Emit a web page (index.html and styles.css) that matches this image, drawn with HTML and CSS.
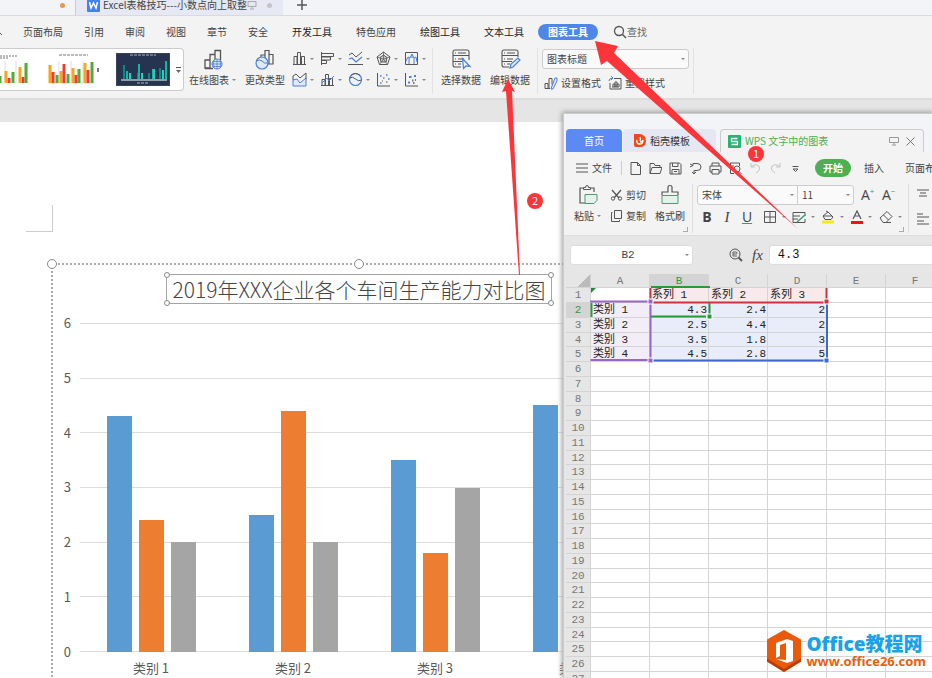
FILE: index.html
```html
<!DOCTYPE html>
<html lang="zh-CN">
<head>
	<meta charset="UTF-8">
	<meta name="viewport" content="width=device-width, initial-scale=1.0">
	<title>Excel表格技巧</title>
	<link rel="stylesheet" href="styles.css">
</head>
<body>
	<!-- Writer window -->
	<div class="writer">
		<div class="doc-tabs">
			<span class="unsaved"></span>
			<div class="doc-tab">
				<svg class="logo-w" width="13" height="13" viewBox="0 0 13 13"><rect width="13" height="13" rx="1" fill="#3f83ee"/><path d="M2.500 3l1.500 6 2.500-5L9 9l1.500-6" fill="none" stroke="#fff" stroke-width="1.500"/></svg>
				<span>Excel表格技巧---小数点向上取整</span>
				<svg class="screen" width="10" height="10" viewBox="0 0 10 10"><path d="M1 1.500h8v5H1zM5 6.500v2M3 9h4" stroke="#aaa"/></svg>
				<span class="grey-dot"></span>
			</div>
			<button class="new-tab" aria-label="新建"><svg width="12" height="12" viewBox="0 0 12 12"><path d="M6 1v10M1 6h10" stroke-width="1.500"/></svg></button>
		</div>

		<nav class="menu">
			<svg class="menu-cut" width="3" height="8" viewBox="0 0 3 8"><path d="M0 5l2 2"/></svg>
			<a href="#">页面布局</a>
			<a href="#">引用</a>
			<a href="#">审阅</a>
			<a href="#">视图</a>
			<a href="#">章节</a>
			<a href="#">安全</a>
			<a href="#" class="tool dark">开发工具</a>
			<a href="#" class="tool">特色应用</a>
			<a href="#" class="tool dark">绘图工具</a>
			<a href="#" class="tool dark">文本工具</a>
			<a href="#" class="pill">图表工具</a>
			<button class="find"><svg width="14" height="14" viewBox="0 0 14 14"><circle cx="6" cy="6" r="4.500" stroke-width="1.300"/><path d="M9.300 9.300L13 13" stroke-width="1.500"/></svg>查找</button>
		</nav>

		<div class="ribbon">
			<div class="gallery">
				<svg class="thumb" width="32" height="34" viewBox="0 0 32 34">
					<path d="M0 3h18M0 5h8" stroke="#777" stroke-dasharray="2 1"/>
					<path d="M5 8v22M16 8v22M27 8v22" stroke="#ddd" stroke-width="1"/>
					<path d="M9 25v5M23 24v6" stroke="#f03c33" stroke-width="3"/>
					<path d="M6 18v12M20 14v16" stroke="#f7a51c" stroke-width="3"/>
					<path d="M0 23v7M13 19v11M26 10v20" stroke="#55a83b" stroke-width="3"/>
				</svg>
				<svg class="thumb" width="54" height="34" viewBox="0 0 54 34">
					<path d="M12 2h29" stroke="#777" stroke-dasharray="3 1"/>
					<path d="M2 30h46M12 8v22M24 8v22M36 8v22" stroke="#ddd"/>
					<path d="M3 12v18M14 18v12M26 15v15M38 10v20" stroke="#f7a51c" stroke-width="3"/>
					<path d="M6 19v11M17 11v19M29 22v8M41 17v13" stroke="#f03c33" stroke-width="3"/>
					<path d="M10 22v8M21 21v9M32 16v14M45 9v21" stroke="#55a83b" stroke-width="3"/>
					<path d="M51 15v4" stroke="#778" stroke-width="2"/>
				</svg>
				<svg class="thumb" width="54" height="33" viewBox="0 0 54 33">
					<rect width="54" height="33" fill="#27344f"/>
					<path d="M14 2h26M21 30h12" stroke="#aeb7c8" stroke-dasharray="3 1"/>
					<path d="M5 27h46" stroke="#fff"/>
					<path d="M8 12v14M22 20v6M33 20v6M44 15v11" stroke="#10857f" stroke-width="2"/>
					<path d="M11 18v8M23 11v15M37 16v10M50 8v18" stroke="#0fb9a5" stroke-width="2"/>
					<path d="M14 20v6M26 20v6M38 16v10M47 17v9" stroke="#19d3bb" stroke-width="2"/>
				</svg>
				<button class="more" aria-label="更多样式"><svg width="7" height="8" viewBox="0 0 7 8"><path d="M1 1.500h5"/><path d="M1 4h5L3.500 7z" fill="#666" stroke="none"/></svg></button>
			</div>
			<button class="big">
				<svg width="22" height="22" viewBox="0 0 22 22"><path d="M3 19V11h5v8zM8 19V5.500h5V11M13 11V1.500h5.500V11M3 19.500h8" stroke-width="1.300"/><circle cx="15" cy="15" r="5" fill="#dfe9fb" stroke="#4b7fdb"/><path d="M10 15h10M15 10v10M12 11.500q-1 4 0 7M18 11.500q1 4 0 7M11 12.500h8M11 17.500h8" stroke="#4b7fdb" stroke-width=".8"/></svg>
				<span>在线图表<i class="caret"></i></span>
			</button>
			<button class="big">
				<svg width="22" height="22" viewBox="0 0 22 22"><path d="M7 9V6h4v8M11 14V1.500h4V15M15 15V5.500h4V15h-7" stroke-width="1.200"/><circle cx="8" cy="14" r="6" fill="#dfe9fb" stroke="#4b7fdb" stroke-width="1.200"/><path d="M2 12q4-2 6 0 2 3 6 2" stroke="#4b7fdb"/></svg>
				<span>更改类型</span>
			</button>
			<div class="kinds">
				<button aria-label="柱形图"><svg width="15" height="15" viewBox="0 0 15 15"><path d="M2 13.500V5.500h3v8M5.500 13.500v-12h3v12M9.500 13.500v-8h3v8M1 13.500h13"/></svg><i class="caret"></i></button>
				<button aria-label="条形图"><svg width="15" height="15" viewBox="0 0 15 15"><path d="M1.500 1v13M1.500 2.500h12v3h-12M1.500 6h9v3h-9M1.500 9.500h5v3h-5"/></svg><i class="caret"></i></button>
				<button aria-label="折线图"><svg width="15" height="15" viewBox="0 0 15 15"><path d="M1 4l3-2 4 4 6-5M0 13.500h15"/><path d="M1 8l3-1 4 4 6-5" stroke="#4b7fdb" stroke-width="1.200"/></svg><i class="caret"></i></button>
				<button aria-label="雷达图"><svg width="15" height="15" viewBox="0 0 15 15"><path d="M7.500 1L14 6l-2.500 7.500h-8L1 6z"/><path d="M7.500 4l3.500 2.500-1 4.500H5L4 6.500z" fill="#ccc"/><path d="M7.500 1v7M1 6l6.500 2L14 6M3.500 13.500l4-5.500 4 5.500" stroke-width=".7"/></svg><i class="caret"></i></button>
				<button aria-label="股价图"><svg width="15" height="15" viewBox="0 0 15 15"><path d="M1.500 1.500h12v12h-12z"/><path d="M2 10l2-4 2 1 2-4 2 4 2-1 1 5M5 7v6M8 4v3M10 7v6" stroke="#4b7fdb"/></svg><i class="caret"></i></button>
				<button aria-label="面积图"><svg width="15" height="15" viewBox="0 0 15 15"><path d="M1 8v6h13V6l-6 5-3-4z" fill="#dfe9fb" stroke="#4b7fdb"/><path d="M1 8V4l3-2 4 4 6-5v6"/></svg><i class="caret"></i></button>
				<button aria-label="组合图"><svg width="15" height="15" viewBox="0 0 15 15"><path d="M2 13.500V7.500h3v6M5.500 13.500v-11h3v11M9.500 13.500v-7h3v7M1 13.500h13"/><path d="M2 11l5-5 2 3 5-5" stroke="#4b7fdb"/></svg><i class="caret"></i></button>
				<button aria-label="饼图"><svg width="15" height="15" viewBox="0 0 15 15"><circle cx="7.500" cy="7.500" r="6" fill="#edf3fd" stroke="#4b7fdb" stroke-width="1.200"/><path d="M1.500 6q3-2 6 1 3 3 6 1M3 3.500q4-4 9 0"/></svg><i class="caret"></i></button>
				<button aria-label="散点图"><svg width="15" height="15" viewBox="0 0 15 15"><path d="M1.500 1v13H14"/><path d="M4 4h1.500M10 3h1.500M12 7h1.500M4 11h1.500" stroke="#4b7fdb" stroke-width="1.500"/><path d="M7 6h1.500M6 9h1M10 10h1.500"/></svg><i class="caret"></i></button>
				<button aria-label="气泡图"><svg width="15" height="15" viewBox="0 0 15 15"><path d="M1.500 1v13H14"/><path d="M5 5h2.500M10 4h2M4 10.500h2" stroke="#4b7fdb" stroke-width="2"/><path d="M8 8.500h1.500M11 8h1M9 11h1.500" stroke="#777" stroke-width="2"/></svg><i class="caret"></i></button>
			</div>
			<div class="split">
				<button class="big">
					<svg width="22" height="22" viewBox="0 0 22 22"><path d="M11 18H5q-2 0-2-2V3q0-2 2-2h12q2 0 2 2v8M3 6.500h16M3 12.500h9M8 4h8M8 10h6M5 4h1M5 10h1M5 15h1M8 15h3" stroke-width="1.100"/><path d="M12.500 9.500l1 10 2.500-2.500 4 .5z" fill="#edf3fd" stroke="#4b7fdb" stroke-width="1.200"/></svg>
					<span>选择数据</span>
				</button>
				<button class="big">
					<svg width="22" height="22" viewBox="0 0 22 22"><path d="M10 18H5q-2 0-2-2V3q0-2 2-2h12q2 0 2 2v5M3 6.500h16M3 12.500h10M8 4h8M8 10h6M5 4h1M5 10h1M5 15h1M8 15h3" stroke-width="1.100"/><path d="M11 19l1-4 7-6 2 2-7 7z" fill="#dfe9fb" stroke="#4b7fdb" stroke-width="1.200"/></svg>
					<span>编辑数据</span>
				</button>
			</div>
			<div class="element">
				<label class="drop"><select aria-label="图表元素"><option>图表标题</option></select><i class="caret"></i></label>
				<div class="element-row">
					<button><svg width="14" height="14" viewBox="0 0 14 14"><path d="M1 12.500V7.500h3v5M5 12.500V2.500h3v6M1 12.500h5"/><path d="M7 13l1-3 3-8h2v3l-4 8z" fill="#dfe9fb" stroke="#4b7fdb"/></svg>设置格式</button>
					<button><svg width="14" height="14" viewBox="0 0 14 14"><path d="M6 2.500h7v10.500H2V7M5 11V8h2v3M7 11V6h2v5M9 11V8h2v3H4"/><path d="M1 5q0-3 4-3M3 0l2 2-2 2" stroke="#4b7fdb"/></svg>重置样式</button>
				</div>
			</div>
		</div>

		<div class="page">
			<div class="crop-mark"></div>
			<div class="chart">
				<i class="handle handle-left"></i>
				<i class="handle handle-mid"></i>
				<h1 class="chart-title">2019年XXX企业各个车间生产能力对比图<i></i><i></i><i></i><i></i></h1>
				<div class="plot-area">
					<div class="y-axis"><span>6</span><span>5</span><span>4</span><span>3</span><span>2</span><span>1</span><span>0</span></div>
					<div class="plot">
						<div class="lines"><i></i><i></i><i></i><i></i><i></i><i></i></div>
						<div class="groups">
							<div class="group"><i style="--v:4.3"></i><i style="--v:2.4"></i><i style="--v:2"></i></div>
							<div class="group"><i style="--v:2.5"></i><i style="--v:4.4"></i><i style="--v:2"></i></div>
							<div class="group"><i style="--v:3.5"></i><i style="--v:1.8"></i><i style="--v:3"></i></div>
							<div class="group"><i style="--v:4.5"></i><i style="--v:2.8"></i><i style="--v:5"></i></div>
						</div>
					</div>
					<div class="x-axis"><span>类别 1</span><span>类别 2</span><span>类别 3</span><span>类别 4</span></div>
				</div>
			</div>
		</div>
	</div>

	<!-- Spreadsheet window floating over the document -->
	<div class="sheet-window">
		<div class="sheet-tabs">
			<button class="home">首页</button>
			<button class="docer"><svg width="12" height="13" viewBox="0 0 12 13"><path d="M0 0h6q6 1 6 7t-6 6H2q-2 0-2-2z" fill="#f04a1c" stroke="none"/><path d="M6 3q1 2 0 4M3 6q-1 4 3 4 3 0 3-4-1 2-3 2" stroke="#fff" stroke-width="1.300"/></svg>稻壳模板</button>
			<div class="current">
				<svg width="13" height="13" viewBox="0 0 13 13"><rect width="13" height="13" rx="1" fill="#1fb573" stroke="none"/><path d="M9.500 3.500h-6v3h6v3h-6" stroke="#fff" stroke-width="1.300"/></svg>
				<span>WPS 文字中的图表</span>
				<svg class="push" width="10" height="10" viewBox="0 0 10 10"><path d="M.5 1.500h9v5h-9zM5 6.500v2M3 9h4" stroke="#999"/></svg>
				<svg width="9" height="9" viewBox="0 0 9 9"><path d="M.5.5l8 8M8.500.5l-8 8" stroke="#777"/></svg>
			</div>
		</div>

		<div class="sheet-menu">
			<button class="file"><svg width="12" height="10" viewBox="0 0 12 10"><path d="M0 1h12M0 5h12M0 9h12" stroke-width="1.200"/></svg>文件</button>
			<div class="quick">
				<svg width="13" height="13" viewBox="0 0 13 13"><path d="M2 .5h6.500L11.500 3.500v9H2zM8.500.5v3h3"/></svg>
				<svg width="13" height="13" viewBox="0 0 13 13"><path d="M1 11.500V1.500h4l1 2h5v2M1 11.500l2-6h10l-2 6z"/></svg>
				<svg width="13" height="13" viewBox="0 0 13 13"><path d="M1 1h9.500L12 2.500V12H1zM3.500 1v3.500H9V1M3 12V7.500h7V12M5 9.500h3"/></svg>
				<svg width="13" height="13" viewBox="0 0 13 13"><path d="M1 2l3 1.500L1 5M4 3.500V1.500h4q4 0 4 3.500t-4 3.500H5v3M3 10l2 2 2-2"/></svg>
				<svg width="13" height="13" viewBox="0 0 13 13"><path d="M3 4V1h7v3M3 10H1V4h11v6h-2M3 7.500h7V12H3z"/></svg>
				<svg width="13" height="13" viewBox="0 0 13 13"><path d="M5 11.500H1.500V1h9v3M3 4h2"/><circle cx="8" cy="7" r="3"/><path d="M10 9.500l2.500 2.500"/></svg>
				<svg width="13" height="13" viewBox="0 0 13 13"><path d="M2 1v4h4M2 5q4-4 8-1 2 4-3 7" stroke="#c4c4c4"/></svg>
				<svg width="13" height="13" viewBox="0 0 13 13"><path d="M11 1v4H7M11 5q-4-4-8-1-2 4 3 7" stroke="#c4c4c4"/></svg>
				<svg width="13" height="13" viewBox="0 0 13 13"><path d="M3.500 4.500h6M4 7h5L6.500 9.500z"/></svg>
			</div>
			<a href="#" class="start">开始</a>
			<a href="#">插入</a>
			<a href="#">页面布局</a>
		</div>

		<div class="sheet-ribbon">
			<div class="clip">
				<button class="stack">
					<svg width="22" height="22" viewBox="0 0 22 22"><path d="M8 19H3V4h3M14 4h3v4" stroke-width="1.200"/><path d="M6.500 5.500v-2h2q0-2 1.500-2t1.500 2h2v2z"/><path d="M8 10.500h12v6l-3 3H8z" fill="#e3f2ea" stroke="#4d9a78"/></svg>
					<span>粘贴<i class="caret"></i></span>
				</button>
				<div class="pair">
					<button><svg width="13" height="12" viewBox="0 0 13 12"><path d="M2 1l7 8M11 1L4 9" stroke-width="1.300"/><circle cx="3" cy="9.500" r="1.700"/><circle cx="10" cy="9.500" r="1.700"/></svg>剪切</button>
					<button><svg width="13" height="12" viewBox="0 0 13 12"><path d="M4.500.5h7v8h-7zM2.500 2.500h-1v9h8v-1.500"/></svg>复制</button>
				</div>
				<button class="stack">
					<svg width="22" height="22" viewBox="0 0 22 22"><path d="M3 11V8h6V3q0-1.500 2-1.500T13 3v5h6v3" stroke-width="1.200"/><path d="M3 11.500h16v8H3z" fill="#e3f2ea" stroke="#4d9a78"/></svg>
					<span>格式刷</span>
				</button>
				<i class="launcher"></i>
			</div>
			<div class="font">
				<div class="font-row">
					<label class="drop face"><select aria-label="字体"><option>宋体</option></select><i class="caret"></i></label>
					<label class="drop size"><select aria-label="字号"><option>11</option></select><i class="caret"></i></label>
					<button class="grow">A<sup>+</sup></button>
					<button class="grow">A<sup>−</sup></button>
				</div>
				<div class="font-row marks">
					<button><b>B</b></button>
					<button><em>I</em></button>
					<button><u>U</u></button>
					<button class="wide"><svg width="14" height="14" viewBox="0 0 14 14"><path d="M1.500 1.500h11v11h-11zM7 1.500v11M1.500 7h11"/></svg><i class="caret"></i></button>
					<button class="wide"><svg width="14" height="14" viewBox="0 0 14 14"><path d="M1 6V2.500h12V6M1 6h7M1 9h5M1 6v6.500h12V9"/><path d="M5 12l8-7" stroke="#3c9a70" stroke-width="1.500"/></svg><i class="caret"></i></button>
					<button class="wide"><svg width="14" height="14" viewBox="0 0 14 14"><path d="M2 6l5-4 5 5-2 2.500H4zM2 6h9M5 1l2 1"/><path d="M1 12h12" stroke="#f5ea14" stroke-width="3"/></svg><i class="caret"></i></button>
					<button class="wide"><svg width="12" height="14" viewBox="0 0 12 14"><path d="M2 9l4-8 4 8M3.500 6h5" stroke-width="1.200"/><path d="M0 12.500h12" stroke="#e8151b" stroke-width="3"/></svg><i class="caret"></i></button>
					<button class="wide"><svg width="14" height="14" viewBox="0 0 14 14"><path d="M1 8l7-6.500 5 5-6 6H4zM4.500 5l5 5M4 12.500h8"/></svg><i class="caret"></i></button>
				</div>
				<i class="launcher"></i>
			</div>
			<div class="align">
				<svg width="12" height="12" viewBox="0 0 12 12"><path d="M0 1h12M3 4h6M2 7h8"/></svg>
				<svg width="12" height="12" viewBox="0 0 12 12"><path d="M0 1h6M0 4h12M0 8h7M0 11h12"/></svg>
			</div>
		</div>

		<div class="formula">
			<label class="drop name"><input type="text" value="B2" aria-label="名称框"><i class="caret"></i></label>
			<svg width="14" height="14" viewBox="0 0 14 14"><circle cx="6" cy="6" r="5"/><path d="M4 8V4h3q1 0 1 1t-1 1H4M4 8h4" stroke-width=".9"/><path d="M9.500 9.500L13 13" stroke-width="1.800"/></svg>
			<em class="fx">fx</em>
			<input class="value" type="text" value="4.3" aria-label="编辑栏">
		</div>

		<div class="sheet">
			<table>
				<thead>
					<tr><th class="corner"></th><th>A</th><th class="on">B</th><th>C</th><th>D</th><th>E</th><th>F</th></tr>
				</thead>
				<tbody>
					<tr><th>1</th><td></td><td class="series">系列 1</td><td class="series">系列 2</td><td class="series">系列 3</td><td></td><td></td></tr>
					<tr><th class="on">2</th><td class="cat">类别 1</td><td class="num">4.3</td><td class="num">2.4</td><td class="num">2</td><td></td><td></td></tr>
					<tr><th>3</th><td class="cat">类别 2</td><td class="num">2.5</td><td class="num">4.4</td><td class="num">2</td><td></td><td></td></tr>
					<tr><th>4</th><td class="cat">类别 3</td><td class="num">3.5</td><td class="num">1.8</td><td class="num">3</td><td></td><td></td></tr>
					<tr><th>5</th><td class="cat">类别 4</td><td class="num">4.5</td><td class="num">2.8</td><td class="num">5</td><td></td><td></td></tr>
					<tr><th>6</th><td></td><td></td><td></td><td></td><td></td><td></td></tr>
					<tr><th>7</th><td></td><td></td><td></td><td></td><td></td><td></td></tr>
					<tr><th>8</th><td></td><td></td><td></td><td></td><td></td><td></td></tr>
					<tr><th>9</th><td></td><td></td><td></td><td></td><td></td><td></td></tr>
					<tr><th>10</th><td></td><td></td><td></td><td></td><td></td><td></td></tr>
					<tr><th>11</th><td></td><td></td><td></td><td></td><td></td><td></td></tr>
					<tr><th>12</th><td></td><td></td><td></td><td></td><td></td><td></td></tr>
					<tr><th>13</th><td></td><td></td><td></td><td></td><td></td><td></td></tr>
					<tr><th>14</th><td></td><td></td><td></td><td></td><td></td><td></td></tr>
					<tr><th>15</th><td></td><td></td><td></td><td></td><td></td><td></td></tr>
					<tr><th>16</th><td></td><td></td><td></td><td></td><td></td><td></td></tr>
					<tr><th>17</th><td></td><td></td><td></td><td></td><td></td><td></td></tr>
					<tr><th>18</th><td></td><td></td><td></td><td></td><td></td><td></td></tr>
					<tr><th>19</th><td></td><td></td><td></td><td></td><td></td><td></td></tr>
					<tr><th>20</th><td></td><td></td><td></td><td></td><td></td><td></td></tr>
					<tr><th>21</th><td></td><td></td><td></td><td></td><td></td><td></td></tr>
					<tr><th>22</th><td></td><td></td><td></td><td></td><td></td><td></td></tr>
					<tr><th>23</th><td></td><td></td><td></td><td></td><td></td><td></td></tr>
					<tr><th>24</th><td></td><td></td><td></td><td></td><td></td><td></td></tr>
					<tr><th>25</th><td></td><td></td><td></td><td></td><td></td><td></td></tr>
					<tr><th>26</th><td></td><td></td><td></td><td></td><td></td><td></td></tr>
					<tr><th>27</th><td></td><td></td><td></td><td></td><td></td><td></td></tr>
				</tbody>
			</table>
			<!-- coloured outlines of the chart ranges -->
			<svg class="ranges" width="270" height="92" viewBox="0 0 270 92">
				<path d="M84.500 15v14M84 29.500h177M260.500 15v14" stroke="#c8373f" stroke-width="2"/>
				<path d="M84.500 30v57h-60M24 28.500h60" stroke="#9a66c4" stroke-width="2"/>
				<path d="M86 87.500h175V30" stroke="#4169cc" stroke-width="2"/>
				<path d="M85 43.500h55M143.500 30v12" stroke="#279a3b" stroke-width="2"/>
				<path d="M85 14h59M25.500 30v14" stroke="#279a3b" stroke-width="2"/>
				<path d="M25 15h5l-5 5z" fill="#1d8b3a" stroke="none"/>
				<path d="M82 26h5v5h-5zM82 85h5v5h-5z" fill="#9a66c4" stroke="#fff"/>
				<path d="M258 26h5v5h-5z" fill="#c8373f" stroke="#fff"/>
				<path d="M258 85h5v5h-5z" fill="#4169cc" stroke="#fff"/>
				<path d="M141 41h5v5h-5z" fill="#279a3b" stroke="#fff"/>
			</svg>
		</div>
	</div>

	<div class="watermark">
		<svg width="36" height="42" viewBox="0 0 36 42"><path d="M18 0l17 9.500v22L18 42 1 31.500v-22z" fill="#ea5a0b" stroke="none"/><path d="M1 31.500L18 42l17-10.500v-3L18 39 1 28.500z" fill="#b83c05" stroke="none"/><path d="M10 13l11-4 6 2v20l-6 2-11-4 10 1V13l-6 2v11l-4 2z" fill="#fff" stroke="none"/></svg>
		<div>
			<strong>Office教程网</strong>
			<a href="#">www.office26.com</a>
		</div>
	</div>

	<!-- arrows and step numbers -->
	<svg class="notes" width="932" height="678" viewBox="0 0 932 678">
		<path d="M595 41l23 5-4 7 184 176L607 61l-6 4z"/>
		<path d="M508 79l7 13-3-1 8 184-1 0-13-184-4 1z"/>
		<circle cx="756" cy="154" r="8"/>
		<circle cx="535" cy="201" r="8"/>
		<text x="756" y="158">1</text>
		<text x="535" y="205">2</text>
	</svg>
</body>
</html>
```

FILE: styles.css
```css
* {
	box-sizing: border-box;
}

body {
	margin: 0;
	position: relative;
	height: 100vh;
	overflow: hidden;
	background: #fff;
	color: #444;
	font: 10px/14px "Noto Sans CJK SC", sans-serif;
	white-space: nowrap;
}

button {
	display: flex;
	align-items: center;
	flex-shrink: 0;
	margin: 0;
	padding: 0;
	border: 0;
	background: none;
	color: inherit;
	font: inherit;
}

a {
	flex-shrink: 0;
	color: inherit;
	text-decoration: none;
}

svg {
	display: block;
	flex-shrink: 0;
	fill: none;
	stroke: #555;
}

input, select {
	appearance: none;
	width: 100%;
	margin: 0;
	padding: 0 4px;
	border: 0;
	background: none;
	color: #444;
	font: inherit;
}

.caret {
	flex-shrink: 0;
	border: 2px solid transparent;
	border-top-color: #888;
	border-bottom: 0;
}

.drop {
	display: flex;
	align-items: center;
	flex-shrink: 0;
	padding-right: 3px;
	background: #fafafa;
	border: 1px solid #ccc;
	border-radius: 3px;
}

/* Writer window */

.writer {
	display: flex;
	flex-direction: column;
	height: 100%;
}

.doc-tabs {
	display: flex;
	flex-shrink: 0;
	height: 16px;
	padding-left: 60px;
	background: #f3f4f8;
	border-bottom: 1px solid #d9dadd;
}

.unsaved, .grey-dot {
	width: 5px;
	height: 5px;
	margin-top: 3px;
	border-radius: 50%;
	background: #e29950;
}

.grey-dot {
	margin-top: 0;
	margin-left: 10px;
	background: #c3c5cc;
}

.doc-tab {
	display: flex;
	align-items: center;
	width: 208px;
	height: 15px;
	margin-left: 10px;
	padding: 0 0 5px 11px;
	background: #e6e9f3;
	border-left: 1px solid #ccc;
}

.doc-tab span {
	flex-shrink: 0;
}

.logo-w {
	margin-right: 3px;
	stroke: none;
}

.new-tab {
	height: 10px;
	margin-left: 13px;
}

.menu {
	display: flex;
	align-items: center;
	flex-shrink: 0;
	gap: 21px;
	height: 32px;
	padding-bottom: 1px;
	background: #f3f3f3;
}

.menu-cut {
	margin-right: -1px;
}

.menu .tool, .menu .pill {
	margin-left: 3px;
}

.menu .dark {
	color: #222;
}

.menu .pill {
	margin: 0 -6px 0 -7px;
	padding: 1px 10px;
	border-radius: 9px;
	background: #4f87e8;
	color: #fff;
	font-weight: bold;
}

.find {
	color: #666;
}

.ribbon {
	display: flex;
	align-items: flex-start;
	flex-shrink: 0;
	height: 52px;
	background: #f3f3f3;
	border-bottom: 2px solid #dcdcdc;
}

.gallery {
	display: flex;
	align-items: center;
	gap: 15px;
	width: 184px;
	height: 43px;
	flex-shrink: 0;
	background: #fff;
	border: 1px solid #ccc;
	border-left: 0;
	border-radius: 0 4px 4px 0;
}

.more {
	margin-left: -10px;
}

.big {
	flex-direction: column;
	gap: 2px;
	margin-left: 5px;
}

.big + .big {
	margin-left: 9px;
}

.big span, .stack span {
	display: flex;
	align-items: center;
	gap: 3px;
}

.big svg {
	margin-top: 1px;
}

.kinds {
	display: grid;
	grid-template-columns: repeat(5, 28px);
	row-gap: 6px;
	margin: 3px 0 0 7px;
}

.kinds button {
	gap: 3px;
}

.split {
	display: flex;
	height: 46px;
	padding: 0 7px 0 3px;
	border: 1px solid #e2e2e2;
	border-width: 0 1px;
}

.element {
	display: flex;
	flex-direction: column;
	gap: 7px;
	height: 46px;
	padding: 1px 4px;
	border-right: 1px solid #e2e2e2;
}

.element .drop {
	width: 147px;
	height: 20px;
}

.element-row {
	display: flex;
	gap: 7px;
	padding-left: 2px;
}

.element-row button {
	gap: 3px;
}

.page {
	flex: 1;
	border-top: 22px solid #e5e5e5;
	padding-left: 51px;
}

/* page corner mark sits in the margin left of the text area */
.crop-mark {
	width: 27px;
	height: 27px;
	margin: 83px 0 31px -25px;
	border: solid #ccc;
	border-width: 0 1px 1px 0;
}

.chart {
	position: relative;
	width: 616px;
	height: 430px;
	border: 2px dotted #aaa;
	padding: 9px 18px 0 8px;
}

.handle {
	position: absolute;
	top: -6px;
	width: 10px;
	height: 10px;
	border: 1px solid #888;
	border-radius: 50%;
	background: #fff;
}

.handle-left {
	left: -6px;
}

.handle-mid {
	left: 50%;
	margin-left: -5px;
}

.chart-title {
	position: relative;
	width: 386px;
	height: 30px;
	margin: 0 0 0 105px;
	border: 1px solid #a5a5a5;
	color: #444;
	font-size: 21px;
	font-weight: 300;
	line-height: 28px;
	text-align: center;
}

.chart-title i {
	position: absolute;
	top: -3px;
	left: -3px;
	width: 6px;
	height: 6px;
	border: 1px solid #888;
	border-radius: 50%;
	background: #fff;
}

.chart-title i:nth-of-type(even) {
	left: auto;
	right: -3px;
}

.chart-title i:nth-of-type(n + 3) {
	top: auto;
	bottom: -3px;
}

.plot-area {
	display: grid;
	grid-template-columns: 10px 568px;
	grid-template-rows: 329px 32px;
	column-gap: 9px;
	margin-top: 19px;
	color: #595959;
	font-size: 13px;
	line-height: 16px;
}

.y-axis {
	display: flex;
	flex-direction: column;
	justify-content: space-between;
	margin: -8px 0;
	text-align: right;
}

.plot {
	display: grid;
}

.lines, .groups {
	grid-area: 1 / 1;
	display: flex;
}

.lines {
	flex-direction: column;
	border-bottom: 1px solid #ddd;
}

.lines i {
	flex: 1;
	border-top: 1px solid #ddd;
}

.group {
	flex: 1;
	display: flex;
	align-items: flex-end;
	justify-content: center;
	gap: 7px;
}

.group i {
	width: 25px;
	height: calc(var(--v) / 6 * 100%);
	background: #5b9bd3;
}

.group i:nth-child(2) {
	background: #ec7d31;
}

.group i:nth-child(3) {
	background: #a5a5a5;
}

.x-axis {
	grid-column: 2;
	display: flex;
	align-items: center;
}

.x-axis span {
	flex: 1;
	text-align: center;
}

/* Spreadsheet window */

.sheet-window {
	position: absolute;
	top: 113px;
	left: 563px;
	right: 0;
	bottom: 0;
	display: flex;
	flex-direction: column;
	overflow: hidden;
	background: #f3f3f3;
	border: 1px solid #ccc;
	border-width: 1px 0 0 1px;
	box-shadow: 0 0 5px 1px #999;
}

.sheet-tabs {
	display: flex;
	flex-shrink: 0;
	height: 38px;
	padding: 15px 8px 0 2px;
	background: #f3f4f8;
}

.home, .docer {
	justify-content: center;
	width: 56px;
	border-radius: 4px 4px 0 0;
	background: #5c8af5;
	color: #fff;
}

.docer {
	justify-content: flex-start;
	gap: 4px;
	width: 93px;
	margin: 0 4px 0 1px;
	padding-left: 11px;
	background: #e5e7f2;
	color: #333;
}

.current {
	display: flex;
	align-items: center;
	flex: 1;
	gap: 4px;
	padding: 0 8px 0 7px;
	border: 1px solid #ccc;
	border-bottom: 0;
	border-radius: 4px 4px 0 0;
	background: #f3f3f3;
	color: #4caf50;
}

.push {
	margin: 0 3px 0 auto;
}

.sheet-menu {
	display: flex;
	align-items: center;
	flex-shrink: 0;
	height: 32px;
	padding-left: 12px;
}

.file {
	gap: 4px;
	padding-right: 9px;
	border-right: 1px solid #ccc;
}

.quick {
	display: flex;
	gap: 7px;
	margin: 0 13px 0 7px;
}

.sheet-menu a {
	margin-right: 21px;
}

.sheet-menu .start {
	margin-right: 13px;
	padding: 2px 8px;
	border-radius: 9px;
	background: #4caf50;
	color: #fff;
	font-weight: bold;
}

.sheet-ribbon {
	display: flex;
	flex-shrink: 0;
	height: 52px;
	padding: 0 0 2px 10px;
	border-bottom: 1px solid #ddd;
}

.clip, .font {
	position: relative;
	display: flex;
	gap: 9px;
	flex-shrink: 0;
	border-right: 1px solid #ddd;
}

.clip {
	width: 119px;
}

.stack {
	flex-direction: column;
	gap: 3px;
	height: 42px;
}

.pair {
	display: flex;
	flex-direction: column;
	gap: 7px;
	padding-top: 4px;
}

.pair button {
	gap: 3px;
}

.launcher {
	position: absolute;
	right: 4px;
	bottom: 1px;
	width: 5px;
	height: 5px;
	border: solid #aaa;
	border-width: 0 1px 1px 0;
}

.font {
	flex-direction: column;
	gap: 3px;
	width: 216px;
	padding: 1px 0 0 4px;
}

.font-row {
	display: flex;
	align-items: center;
}

.font .drop {
	height: 20px;
}

.face {
	width: 101px;
	border-radius: 3px 0 0 3px;
}

.size {
	width: 57px;
	margin: 0 7px 0 -1px;
	border-radius: 0 3px 3px 0;
}

.grow {
	align-items: flex-start;
	width: 21px;
	font: 14px/16px "Open Sans", sans-serif;
}

.grow sup {
	font-size: 8px;
	line-height: 8px;
	color: #3c9a70;
}

.marks button {
	justify-content: center;
	width: 20px;
	height: 18px;
	font: 14px/16px "Open Sans", sans-serif;
}

.marks em {
	font-family: "Liberation Serif", serif;
	font-size: 15px;
}

.marks u {
	text-decoration-color: #3c9a70;
}

.marks .wide {
	gap: 5px;
	width: 29px;
}

.marks button:nth-child(3) {
	margin-right: 3px;
}

.align {
	display: flex;
	flex-direction: column;
	gap: 12px;
	padding: 5px 0 0 8px;
}

.formula {
	display: flex;
	align-items: center;
	flex-shrink: 0;
	height: 38px;
	padding-left: 6px;
	background: #e6e6e6;
	font: 11px/16px "Liberation Mono", monospace;
}

.formula .drop, .value {
	height: 20px;
	background: #fff;
	border: 1px solid #ddd;
}

.name {
	width: 123px;
	margin-right: 36px;
}

.name input {
	text-align: center;
}

.fx {
	margin: 0 6px 0 9px;
	font-family: "Liberation Serif", serif;
	font-size: 15px;
}

.value {
	flex: 1;
	padding-left: 8px;
	border-width: 1px 0 1px 1px;
	border-radius: 3px 0 0 3px;
	font-size: 12px;
	color: #111;
}

.sheet {
	position: relative;
	flex: 1;
	overflow: hidden;
	padding-left: 2px;
	background: #e6e6e6;
	color: #222;
	font: 11px/12px "Liberation Mono", "Noto Sans CJK SC", monospace;
}

table {
	table-layout: fixed;
	width: 379px;
	border-collapse: separate;
	border-spacing: 0;
}

th, td {
	width: 59px;
	height: 15px;
	padding: 0 1px;
	border: solid #d4d4d4;
	border-width: 0 1px 1px 0;
	background: #fff;
	line-height: 12px;
	overflow: hidden;
}

/* rows run a shade under 15px on average */
thead th, tbody tr:nth-child(4n) > * {
	height: 14px;
}

th {
	background: #e6e6e6;
	color: #777;
	font-weight: normal;
}

th:first-child {
	width: 25px;
}

th.corner {
	background: linear-gradient(135deg, #e6e6e6 65%, #bbb 65%);
}

th.on {
	background: #d4d4d4;
	color: #2f9c42;
}

.series, .cat {
	padding-left: 2px;
}

.series {
	background: #f9e9ea;
}

.cat {
	background: #f3edf7;
}

.num {
	background: #e9ecf9;
	text-align: right;
}

.ranges {
	position: absolute;
	top: -1px;
	left: 2px;
}

/* Things drawn over both windows */

.watermark {
	position: absolute;
	right: 6px;
	bottom: 6px;
	display: flex;
	align-items: center;
	gap: 4px;
	font-family: "Open Sans", "Noto Sans CJK SC", sans-serif;
	font-weight: bold;
	text-shadow: 0 0 2px #fff, 0 0 2px #fff;
}

.watermark strong, .watermark a {
	display: block;
	color: #19a3e6;
	font-size: 19px;
	line-height: 20px;
}

.watermark a {
	color: #e8600f;
	font-size: 13px;
	line-height: 14px;
}

.notes {
	position: absolute;
	top: 0;
	left: 0;
	fill: #fb3539;
	stroke: none;
	pointer-events: none;
}

.notes text {
	fill: #fff;
	font-size: 11px;
	text-anchor: middle;
}
```
